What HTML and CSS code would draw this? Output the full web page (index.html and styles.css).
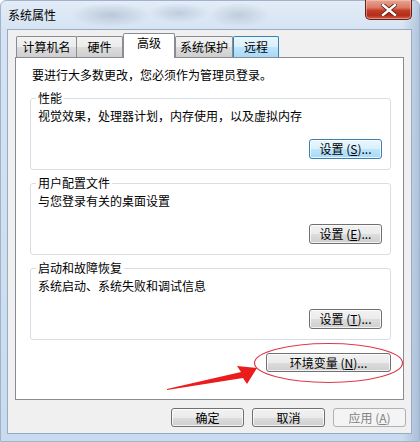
FILE: index.html
```html
<!DOCTYPE html>
<html lang="zh-CN">
<head>
<meta charset="UTF-8">
<title>系统属性</title>
<link rel="stylesheet" href="styles.css">
</head>
<body>

<!-- window -->
<div class="window">

	<!-- title bar -->
	<div class="titlebar">
		<span class="title">系统属性</span>
		<div class="close">
			<svg width="16" height="12" viewBox="0 0 16 12">
				<path d="M2 1 L14 11 M14 1 L2 11" stroke="#5b1f16" stroke-width="4.2" stroke-linecap="square"/>
				<path d="M2 1 L14 11 M14 1 L2 11" stroke="#fff" stroke-width="2.4" stroke-linecap="square"/>
			</svg>
		</div>
	</div>

	<!-- client area -->
	<div class="client">

		<div class="tabs">
			<span class="tab tab-name">计算机名</span>
			<span class="tab tab-hw">硬件</span>
			<span class="tab tab-adv selected">高级</span>
			<span class="tab tab-prot">系统保护</span>
			<span class="tab tab-remote hot">远程</span>
		</div>

		<div class="panel">
			<p class="intro">要进行大多数更改，您必须作为管理员登录。</p>

			<div class="group">
				<div class="group-title">性能</div>
				<p class="group-text">视觉效果，处理器计划，内存使用，以及虚拟内存</p>
				<div class="group-actions">
					<button class="btn btn-hot">设置 (<u>S</u>)...</button>
				</div>
			</div>

			<div class="group">
				<div class="group-title">用户配置文件</div>
				<p class="group-text">与您登录有关的桌面设置</p>
				<div class="group-actions">
					<button class="btn">设置 (<u>E</u>)...</button>
				</div>
			</div>

			<div class="group">
				<div class="group-title">启动和故障恢复</div>
				<p class="group-text">系统启动、系统失败和调试信息</p>
				<div class="group-actions">
					<button class="btn">设置 (<u>T</u>)...</button>
				</div>
			</div>

			<div class="env-row">
				<button class="btn btn-env">环境变量 (<u>N</u>)...</button>
			</div>
		</div>

		<!-- footer buttons -->
		<div class="footer">
			<button class="btn btn-footer">确定</button>
			<button class="btn btn-footer">取消</button>
			<button class="btn btn-footer btn-disabled">应用 (<u>A</u>)</button>
		</div>
	</div>

	<!-- red annotation drawn over the screenshot -->
	<svg class="annotation" width="420" height="442" viewBox="0 0 420 442">
		<ellipse cx="328.5" cy="363" rx="74" ry="19.5" fill="none" stroke="#de3a4a" stroke-width="1.2"/>
		<polygon points="167,389 241,372 237,366 257,368 247,384 243,378 167,390" fill="#ea1c1c"/>
	</svg>
</div>

</body>
</html>
```

FILE: styles.css
```css
/* -------------------------------------
		GLOBAL
------------------------------------- */
* {
	margin: 0;
	padding: 0;
	box-sizing: border-box;
}

body {
	font-family: "Noto Sans CJK SC", "Noto Sans", sans-serif;
	font-size: 12px;
	color: #000;
	background: #fff;
}

u {
	text-decoration: underline;
	text-underline-offset: 1px;
}


/* -------------------------------------
		WINDOW FRAME
------------------------------------- */
.window {
	position: relative;
	width: 420px;
	height: 442px;
	display: flex;
	flex-direction: column;
	border: 1px solid #9fb4cc;
	border-radius: 6px 6px 0 0;
	background:
		radial-gradient(ellipse 40px 12px at 110px 14px, rgba(120,140,165,.35), transparent),
		radial-gradient(ellipse 30px 10px at 178px 12px, rgba(120,140,165,.3), transparent),
		radial-gradient(ellipse 30px 12px at 238px 14px, rgba(120,140,165,.3), transparent),
		linear-gradient(90deg, transparent 96%, rgba(110,140,175,.35) 100%),
		linear-gradient(#e3ecf7 0, #d5e3f2 30px, #c9dbee 100%);
}

.titlebar {
	height: 28px;
	display: flex;
	justify-content: space-between;
	align-items: flex-start;
	padding: 0 7px 0 7px;
}

.title {
	line-height: 28px;
	font-size: 12px;
}

.close {
	width: 47px;
	height: 20px;
	margin-top: -1px;
	display: flex;
	align-items: center;
	justify-content: center;
	border: 1px solid #5e2219;
	border-top: none;
	border-radius: 0 0 5px 5px;
	background: linear-gradient(#e9a593 0%, #d97a64 40%, #c43d28 55%, #b32b1a 80%, #d46048 100%);
	box-shadow: inset 0 0 0 1px rgba(255,210,200,.45);
}

.client {
	flex: 1;
	margin: 0 7px 7px 6px;
	display: flex;
	flex-direction: column;
	border: 1px solid #98abc3;
	background: #f0f0f0;
}


/* -------------------------------------
		TABS
------------------------------------- */
.tabs {
	height: 27px;
	display: flex;
	align-items: flex-end;
	padding-left: 8px;
}

.tab {
	height: 21px;
	line-height: 20px;
	text-align: center;
	border: 1px solid #898c95;
	border-bottom: none;
	border-radius: 2px 2px 0 0;
	background: linear-gradient(#f3f3f3 0%, #ebebeb 50%, #dddddd 50%, #cfcfcf 100%);
}

.tab-name { width: 61px; }
.tab-hw { width: 47px; margin-left: -1px; }
.tab-adv { width: 52px; }
.tab-prot { width: 58px; }
.tab-remote { width: 46px; }

.tab.hot {
	border-color: #3c7fb1;
	background: linear-gradient(#eaf6fd 0%, #d9f0fc 50%, #bee6fd 50%, #a7d9f5 100%);
}

.tab.selected {
	position: relative;
	z-index: 1;
	height: 25px;
	line-height: 18px;
	margin-bottom: -1px;
	background: #fff;
}


/* -------------------------------------
		PANEL
------------------------------------- */
.panel {
	height: 343px;
	margin: 0 7px 0 7px;
	padding: 10px 12px 0 16px;
	border: 1px solid #898c95;
	background: #fff;
}

.intro {
	line-height: 14px;
}

.group {
	height: 72px;
	margin: 16px 0 0 -2px;
	padding: 0 8px 10px 7px;
	display: flex;
	flex-direction: column;
	border: 1px solid #d5dfe5;
	border-radius: 3px;
	box-shadow: inset 0 0 0 1px #fff;
}

.group + .group {
	margin-top: 13px;
}

.group-title {
	width: fit-content;
	margin: -8px 0 0 -2px;
	padding: 0 2px;
	line-height: 14px;
	background: #fff;
}

.group-text {
	margin-top: 4px;
	line-height: 14px;
}

.group-actions {
	margin-top: auto;
	display: flex;
	justify-content: flex-end;
}

.env-row {
	display: flex;
	justify-content: flex-end;
	margin-top: 13px;
}


/* -------------------------------------
		BUTTONS
------------------------------------- */
.btn {
	width: 73px;
	height: 20px;
	font-family: inherit;
	font-size: 12px;
	line-height: 16px;
	color: #000;
	border: 1px solid #707070;
	border-radius: 3px;
	background: linear-gradient(#f2f2f2 0%, #ebebeb 50%, #dddddd 50%, #cfcfcf 100%);
	box-shadow: inset 0 0 0 1px rgba(255,255,255,.75);
}

.btn-hot {
	border-color: #3c7fb1;
	background: linear-gradient(#eaf6fd 0%, #d9f0fc 50%, #bee6fd 50%, #a7d9f5 100%);
}

.btn-env {
	width: 125px;
	height: 19px;
}

.footer {
	display: flex;
	justify-content: flex-end;
	gap: 8px;
	padding: 8px 5px 0 0;
}

.btn-footer {
	height: 19px;
}

.btn-disabled {
	color: #838383;
	border-color: #adb2b5;
	background: #f4f4f4;
	box-shadow: none;
}


/* -------------------------------------
		ANNOTATION
------------------------------------- */
.annotation {
	position: absolute;
	left: -1px;
	top: -1px;
	pointer-events: none;
}
```
